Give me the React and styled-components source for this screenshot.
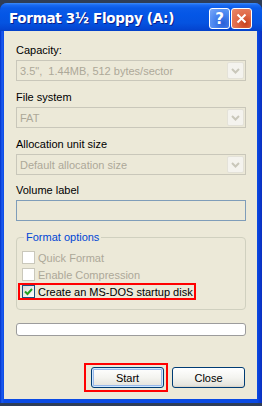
import styled, { createGlobalStyle } from "styled-components";

const Global = createGlobalStyle`
  html, body {
    margin: 0;
    padding: 0;
    background: #2e3d57;
  }
  body {
    font-family: Tahoma, "Liberation Sans", Arial, sans-serif;
    font-size: 11px;
  }
`;

const Window = styled.div`
  width: 262px;
  height: 400px;
  margin-top: 3px;
  display: flex;
  flex-direction: column;
  border-radius: 7px 7px 0 0;
  box-sizing: border-box;
  padding: 0 5px 4px 4px;
  background: linear-gradient(to right, #0031c8 0px, #1c5cf0 2px, #0a4ae4 4px, #0a4ae4 257px, #0a2fbf 262px);
`;

const TitleBar = styled.div`
  height: 28px;
  margin: 0 -5px 0 -4px;
  padding: 0 10px 0 9px;
  display: flex;
  align-items: center;
  border-radius: 7px 7px 0 0;
  background: linear-gradient(
    to bottom,
    #3d8cf8 0px,
    #1a6af2 2px,
    #0a5be8 5px,
    #0456e6 12px,
    #0553e0 20px,
    #0446d2 26px,
    #0340c8 28px
  );
`;

const Title = styled.div`
  flex: 1;
  color: #fff;
  font-family: "DejaVu Sans", Verdana, sans-serif;
  font-weight: bold;
  font-size: 13.5px;
  letter-spacing: -0.3px;
  text-shadow: 1px 1px 0 #0a1e8c;
  padding-top: 2px;
`;

const TitleButton = styled.div`
  width: 21px;
  height: 21px;
  box-sizing: border-box;
  border: 1px solid #fff;
  border-radius: 3px;
  margin-left: 1px;
  margin-top: 3px;
  display: flex;
  align-items: center;
  justify-content: center;
  color: #fff;
  font-family: "DejaVu Sans", sans-serif;
  font-weight: bold;
  font-size: 15px;
  background: ${(p) =>
    p.$close
      ? "radial-gradient(circle at 70% 75%, #c8401c 0%, #e06a48 45%, #e9896a 100%)"
      : "radial-gradient(circle at 70% 75%, #2a5fd8 0%, #4a86f0 50%, #7aa8f8 100%)"};
`;

const Client = styled.div`
  flex: 1;
  background: #ece9d8;
  padding: 13px 11px 0 12px;
  display: flex;
  flex-direction: column;
  color: #000;
`;

const Label = styled.div`
  height: 13px;
  line-height: 13px;
  margin-top: ${(p) => p.$gap || 0}px;
  margin-bottom: 3px;
`;

const Combo = styled.div`
  height: 21px;
  box-sizing: border-box;
  border: 1px solid #c9c7ba;
  display: flex;
  align-items: center;
  padding-left: 3px;
  padding-right: 1px;
  color: #aca899;
`;

const ComboText = styled.span`
  flex: 1;
`;

const DropButton = styled.div`
  width: 17px;
  height: 17px;
  box-sizing: border-box;
  border: 1px solid #e4e2d8;
  border-radius: 2px;
  background: #f4f3ee;
  display: flex;
  align-items: center;
  justify-content: center;
`;

const TextBox = styled.div`
  height: 21px;
  box-sizing: border-box;
  border: 1px solid #7f9db9;
`;

const Group = styled.fieldset`
  margin: 10px 0 0 0;
  padding: 5px 0 9px 1px;
  border: 1px solid #d0d0bf;
  border-radius: 4px;
  display: flex;
  flex-direction: column;
  gap: 0;

  legend {
    color: #0046d5;
    padding: 0 2px;
    margin-left: 6px;
    line-height: 13px;
  }
`;

const CheckRow = styled.label`
  display: flex;
  align-items: center;
  gap: 3px;
  height: 13px;
  width: fit-content;
  padding: 0 1px 0 2px;
  border: 2px solid ${(p) => (p.$marked ? "#ff0000" : "transparent")};
  color: ${(p) => (p.$disabled ? "#aca899" : "#000")};
`;

const Box = styled.span`
  width: 13px;
  height: 13px;
  box-sizing: border-box;
  border: 1px solid ${(p) => (p.$disabled ? "#cac8bb" : "#1c5180")};
  background: ${(p) =>
    p.$disabled ? "#fff" : "linear-gradient(135deg, #dcdcd7 0%, #fff 100%)"};
  display: flex;
  align-items: center;
  justify-content: center;
`;

const Progress = styled.div`
  height: 13px;
  margin-top: 13px;
  box-sizing: border-box;
  border: 1px solid #9c9c9c;
  border-radius: 3px;
  background: #fff;
`;

const Buttons = styled.div`
  margin-top: auto;
  margin-bottom: 7px;
  display: flex;
  justify-content: flex-end;
  align-items: center;
  gap: 4px;
  padding-right: 1px;
`;

const Marked = styled.div`
  border: 2px solid #ff0000;
  padding: 2px 2px 2px 5px;
`;

const Button = styled.div`
  width: 73px;
  height: 21px;
  box-sizing: border-box;
  border: 1px solid #003c74;
  border-radius: 3px;
  display: flex;
  align-items: center;
  justify-content: center;
  background: linear-gradient(to bottom, #ffffff 0%, #f4f4f0 50%, #e6e5de 90%, #d6d0c5 100%);
  box-shadow: ${(p) =>
    p.$focus ? "inset 0 0 0 1px #cee7ff, inset 0 0 0 2px #98b8ea" : "none"};
`;

const Chevron = () => (
  <svg width="9" height="6" viewBox="0 0 9 6">
    <path d="M1 1 L4.5 4.5 L8 1" fill="none" stroke="#c9c7ba" strokeWidth="2" />
  </svg>
);

const Check = () => (
  <svg width="9" height="8" viewBox="0 0 9 8">
    <path d="M1 3.5 L3.5 6 L8 1" fill="none" stroke="#21a121" strokeWidth="2" />
  </svg>
);

const Select = ({ children }) => (
  <Combo>
    <ComboText>{children}</ComboText>
    <DropButton>
      <Chevron />
    </DropButton>
  </Combo>
);

export default function App() {
  return (
    <>
      <Global />
      <Window>
        <TitleBar>
          <Title>Format 3½ Floppy (A:)</Title>
          <TitleButton>?</TitleButton>
          <TitleButton $close>
            <svg width="11" height="11" viewBox="0 0 11 11">
              <path d="M1.5 1.5 L9.5 9.5 M9.5 1.5 L1.5 9.5" stroke="#fff" strokeWidth="2" />
            </svg>
          </TitleButton>
        </TitleBar>
        <Client>
          <Label>Capacity:</Label>
          <Select>3.5",&nbsp; 1.44MB, 512 bytes/sector</Select>
          <Label $gap={10}>File system</Label>
          <Select>FAT</Select>
          <Label $gap={10}>Allocation unit size</Label>
          <Select>Default allocation size</Select>
          <Label $gap={9}>Volume label</Label>
          <TextBox />
          <Group>
            <legend>Format options</legend>
            <CheckRow $disabled>
              <Box $disabled />
              Quick Format
            </CheckRow>
            <CheckRow $disabled>
              <Box $disabled />
              Enable Compression
            </CheckRow>
            <CheckRow $marked>
              <Box>
                <Check />
              </Box>
              Create an MS-DOS startup disk
            </CheckRow>
          </Group>
          <Progress />
          <Buttons>
            <Marked>
              <Button $focus>Start</Button>
            </Marked>
            <Button>Close</Button>
          </Buttons>
        </Client>
      </Window>
    </>
  );
}
